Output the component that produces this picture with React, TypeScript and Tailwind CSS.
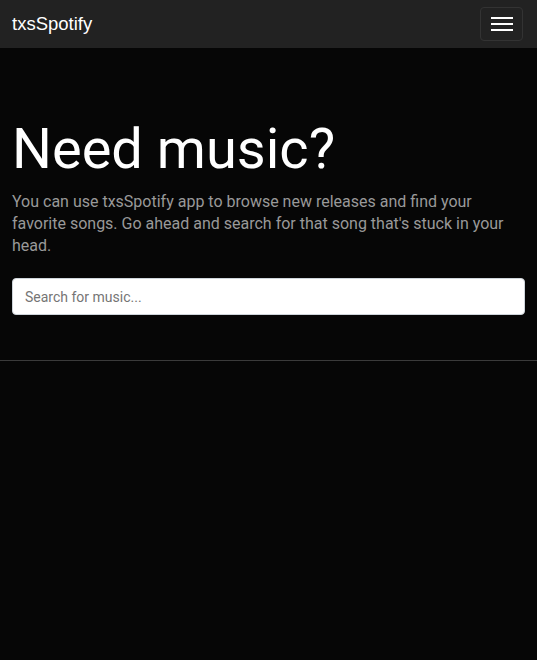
import React from 'react';

const App: React.FC = () => {
  return (
    <div className="min-h-screen bg-[#060606] font-['Roboto',sans-serif]">
      <nav className="h-12 bg-[#222222] flex items-center justify-between pl-3 pr-[14px]">
        <span className="text-white text-[18.5px] font-['Liberation_Sans',Arial,sans-serif]">
          txsSpotify
        </span>
        <button className="w-[43px] h-[34px] border border-[#333333] rounded flex flex-col items-center justify-center gap-[4px]">
          <span className="block w-[22px] h-[2px] bg-white"></span>
          <span className="block w-[22px] h-[2px] bg-white"></span>
          <span className="block w-[22px] h-[2px] bg-white"></span>
        </button>
      </nav>

      <section className="px-3 pt-[68px] pb-[45px] border-b border-[#3a3a3a]">
        <h1 className="text-white text-[56px] leading-[1.2] font-normal">Need music?</h1>
        <p className="mt-[8px] text-[#999999] text-[16px] leading-[22px]">
          You can use txsSpotify app to browse new releases and find your favorite songs. Go ahead and search for that song that's stuck in your head.
        </p>
        <input
          type="text"
          placeholder="Search for music..."
          className="mt-[21px] w-full h-[37px] bg-white rounded border border-[#ced4da] px-3 text-[14px] text-[#495057] placeholder:text-[#757575] outline-none"
        />
      </section>
    </div>
  );
};

export default App;
